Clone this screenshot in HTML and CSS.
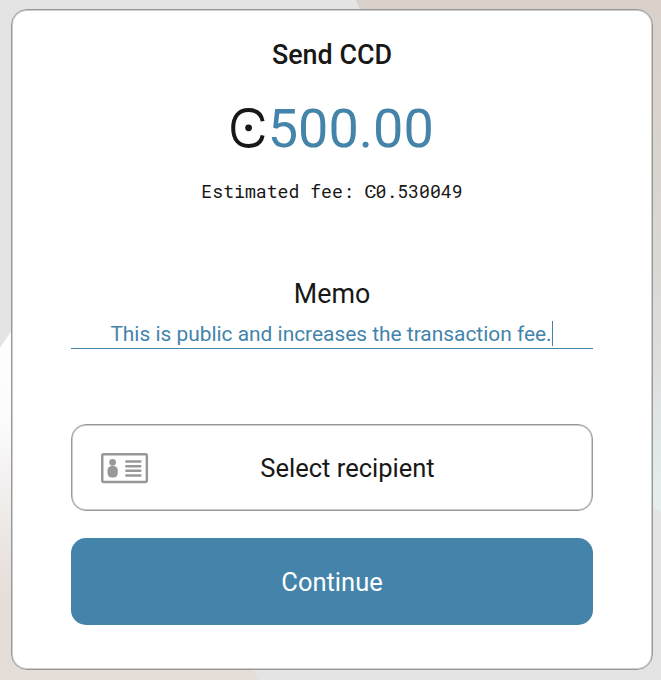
FILE: index.html
```html
<!DOCTYPE html>
<html lang="en">
<head>
<meta charset="utf-8">
<title>Send CCD</title>
<link rel="stylesheet" href="styles.css">
</head>
<body>
<svg class="backdrop" viewBox="0 0 661 680" preserveAspectRatio="none" aria-hidden="true">
  <defs>
    <linearGradient id="left" x1="0" y1="0" x2="0" y2="1">
      <stop offset="0" stop-color="#ffffff"/>
      <stop offset=".3" stop-color="#fbfbfb"/>
      <stop offset=".6" stop-color="#ebe7e4"/>
      <stop offset=".8" stop-color="#e5ddd8"/>
      <stop offset="1" stop-color="#e5ddd8"/>
    </linearGradient>
    <linearGradient id="right" x1="0" y1="0" x2="0" y2="1">
      <stop offset="0" stop-color="#d9d0ca"/>
      <stop offset=".45" stop-color="#dad6d1"/>
      <stop offset=".7" stop-color="#dededb"/>
      <stop offset=".83" stop-color="#e0e6e8"/>
      <stop offset="1" stop-color="#e5eeef"/>
    </linearGradient>
  </defs>
  <path fill="url(#left)" d="M0 348Q6 338 20 320L200 600Q250 660 258 680H0Z"/>
  <path fill="url(#right)" d="M356 0H661V512Q650 508 640 490L361 12Z"/>
</svg>
<main class="card">
  <h1 class="title">Send CCD</h1>
  <div class="amount">
    <svg class="ccd" viewBox="0 0 36 42" role="img" aria-label="CCD">
      <path d="M32.6 14.2C31.4 6.6 26.2 3.1 18.6 3.1C8.7 3.1 3.2 9.5 3.2 21S8.7 38.9 18.6 38.9C26.2 38.9 31.4 35.4 32.6 28.3" fill="none" stroke="currentColor" stroke-width="4"/>
      <circle cx="18.6" cy="20.8" r="3.4" fill="currentColor"/>
    </svg><span class="value">500.00</span>
  </div>
  <p class="fee">Estimated fee: <span class="unit">C</span>0.530049</p>
  <section class="memo">
    <h2 class="label">Memo</h2>
    <div class="field"><span class="text">This is public and increases the transaction fee.</span></div>
  </section>
  <button class="button recipient" type="button">
    <svg class="id-card" viewBox="0 0 48 31" aria-hidden="true">
      <rect x="1.25" y="1.25" width="44.6" height="27.8" rx="1.5" fill="none" stroke="currentColor" stroke-width="2.5"/>
      <circle cx="11.6" cy="9.3" r="3.4" fill="currentColor"/>
      <rect x="6.5" y="13" width="10.3" height="11.4" rx="4.3" fill="currentColor"/>
      <path d="M25.3 8.6h14M25.3 13.2h14M25.3 17.8h14M25.3 22.4h14" stroke="currentColor" stroke-width="2.5" stroke-linecap="round"/>
    </svg>
    <span>Select recipient</span>
  </button>
  <button class="button continue" type="button">Continue</button>
</main>
</body>
</html>
```
FILE: styles.css
```css
* {
  box-sizing: border-box;
}

body {
  margin: 0;
  height: 680px;
  padding: 9px 8px 10px 11px;
  overflow: hidden;
  background: #e4e4e4;
  color: #181817;
  font-family: Roboto, sans-serif;
}

.backdrop {
  position: absolute;
  inset: 0;
  z-index: -1;
  width: 661px;
  height: 680px;
}

.card {
  display: flex;
  flex-direction: column;
  height: 661px;
  padding: 28px 59px 0;
  border: 1px solid #989898;
  border-radius: 16px;
  background: #fff;
  box-shadow: inset 0 0 0 1px #cecece;
}

.title {
  margin: 0;
  font-size: 26.9px;
  font-weight: 500;
  line-height: 34px;
  text-align: center;
}

.amount {
  display: flex;
  justify-content: center;
  align-items: flex-start;
  height: 64px;
  margin-top: 25px;
}

.ccd {
  width: 36px;
  height: 42px;
  margin: 9.5px 1.5px 0 0;
}

.value {
  color: #4484ab;
  font-size: 54px;
  line-height: 64px;
}

.fee {
  margin: 18px 0 0;
  font-family: "Roboto Mono", "Liberation Mono", monospace;
  font-size: 18.15px;
  line-height: 24px;
  text-align: center;
}

.unit {
  display: inline-block;
  position: relative;
  transform: scaleX(1.15);
}

.unit::after {
  content: "";
  position: absolute;
  left: 5px;
  top: 11px;
  width: 2px;
  height: 2px;
  border-radius: 50%;
  background: #181817;
}

.memo {
  margin-top: 74px;
}

.label {
  margin: 0;
  font-size: 26.8px;
  font-weight: 400;
  line-height: 34px;
  text-align: center;
}

.field {
  height: 38px;
  padding-top: 10px;
  border-bottom: 1px solid #4484ab;
  color: #4484ab;
  font-size: 20.9px;
  line-height: 26px;
  text-align: center;
}

.text {
  display: inline-block;
  height: 25px;
  margin-right: 1px;
  border-right: 1px solid #4484ab;
}

.button {
  display: flex;
  flex: none;
  justify-content: center;
  align-items: center;
  height: 87px;
  padding: 0;
  border: 0;
  border-radius: 15px;
  font: 25.5px/34px Roboto, sans-serif;
}

.recipient {
  position: relative;
  margin-top: 75px;
  padding-left: 31px;
  border: 1px solid #989898;
  background: #fff;
  box-shadow: inset 0 0 0 1px #cecece;
  color: #181817;
}

.id-card {
  position: absolute;
  left: 29px;
  top: 27.5px;
  width: 48px;
  height: 31px;
  color: #989898;
}

.continue {
  margin-top: 27px;
  background: #4484ab;
  color: #fff;
}
```
